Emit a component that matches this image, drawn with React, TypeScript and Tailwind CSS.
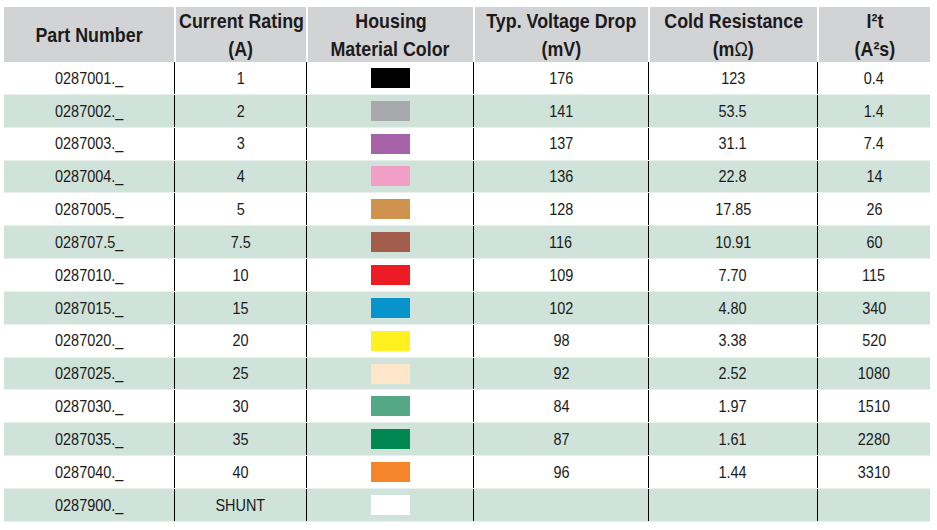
import React from "react";

type Row = { pn: string; a: string; color: string; mv: string; r: string; i2t: string };

const rows: Row[] = [
  { pn: "0287001._", a: "1", color: "#000000", mv: "176", r: "123", i2t: "0.4" },
  { pn: "0287002._", a: "2", color: "#a7a9ac", mv: "141", r: "53.5", i2t: "1.4" },
  { pn: "0287003._", a: "3", color: "#a763a8", mv: "137", r: "31.1", i2t: "7.4" },
  { pn: "0287004._", a: "4", color: "#f29fc5", mv: "136", r: "22.8", i2t: "14" },
  { pn: "0287005._", a: "5", color: "#d0924f", mv: "128", r: "17.85", i2t: "26" },
  { pn: "028707.5_", a: "7.5", color: "#a25e4a", mv: "116", r: "10.91", i2t: "60" },
  { pn: "0287010._", a: "10", color: "#ed1c24", mv: "109", r: "7.70", i2t: "115" },
  { pn: "0287015._", a: "15", color: "#0793cb", mv: "102", r: "4.80", i2t: "340" },
  { pn: "0287020._", a: "20", color: "#fff01f", mv: "98", r: "3.38", i2t: "520" },
  { pn: "0287025._", a: "25", color: "#fde6c9", mv: "92", r: "2.52", i2t: "1080" },
  { pn: "0287030._", a: "30", color: "#55a886", mv: "84", r: "1.97", i2t: "1510" },
  { pn: "0287035._", a: "35", color: "#008752", mv: "87", r: "1.61", i2t: "2280" },
  { pn: "0287040._", a: "40", color: "#f5842a", mv: "96", r: "1.44", i2t: "3310" },
  { pn: "0287900._", a: "SHUNT", color: "#ffffff", mv: "", r: "", i2t: "" },
];

const cols = "grid-cols-[170px_132px_167px_175px_169px_113px]";

function N({ children }: { children: React.ReactNode }) {
  return <span className="inline-block whitespace-nowrap scale-x-[0.85] origin-center">{children}</span>;
}

export default function App() {
  return (
    <div
      className="w-[937px] h-[530px] bg-white pt-[7px] pl-[4px] text-[#1c1a1b]"
      style={{ fontFamily: '"Liberation Sans", Arial, sans-serif' }}
    >
      <div className="w-[926px]">
        <div className={`grid ${cols} h-[55px] bg-[#d1d3d4] text-[21px] font-bold leading-[27.5px] text-center`}>
          <div className="flex items-center justify-center">
            <N>Part Number</N>
          </div>
          <div className="flex flex-col items-center justify-center border-l-2 border-white">
            <N>Current Rating</N>
            <N>(A)</N>
          </div>
          <div className="flex flex-col items-center justify-center border-l-2 border-white">
            <N>Housing</N>
            <N>Material Color</N>
          </div>
          <div className="flex flex-col items-center justify-center border-l-2 border-white">
            <N>Typ. Voltage Drop</N>
            <N>(mV)</N>
          </div>
          <div className="flex flex-col items-center justify-center border-l-2 border-white">
            <N>Cold Resistance</N>
            <N>
              (m<span className="font-normal">Ω</span>)
            </N>
          </div>
          <div className="flex flex-col items-center justify-center border-l-2 border-white">
            <N>I²t</N>
            <N>(A²s)</N>
          </div>
        </div>
        {rows.map((r, i) => (
          <div
            key={r.pn}
            className={`grid ${cols} h-[32.85px] text-[17px] text-center border-b border-[#e9f0ec] ${
              i % 2 === 1 ? "bg-[#cfe3da]" : "bg-white"
            }`}
          >
            <div className="flex items-center justify-center pt-px">
              <N>{r.pn}</N>
            </div>
            <div className="flex items-center justify-center pt-px border-l border-black">
              <N>{r.a}</N>
            </div>
            <div className="flex items-center justify-center border-l border-black">
              <div className="w-[39px] h-[20px]" style={{ backgroundColor: r.color }} />
            </div>
            <div className="flex items-center justify-center pt-px border-l border-black">
              <N>{r.mv}</N>
            </div>
            <div className="flex items-center justify-center pt-px border-l border-black">
              <N>{r.r}</N>
            </div>
            <div className="flex items-center justify-center pt-px border-l border-black">
              <N>{r.i2t}</N>
            </div>
          </div>
        ))}
      </div>
    </div>
  );
}
